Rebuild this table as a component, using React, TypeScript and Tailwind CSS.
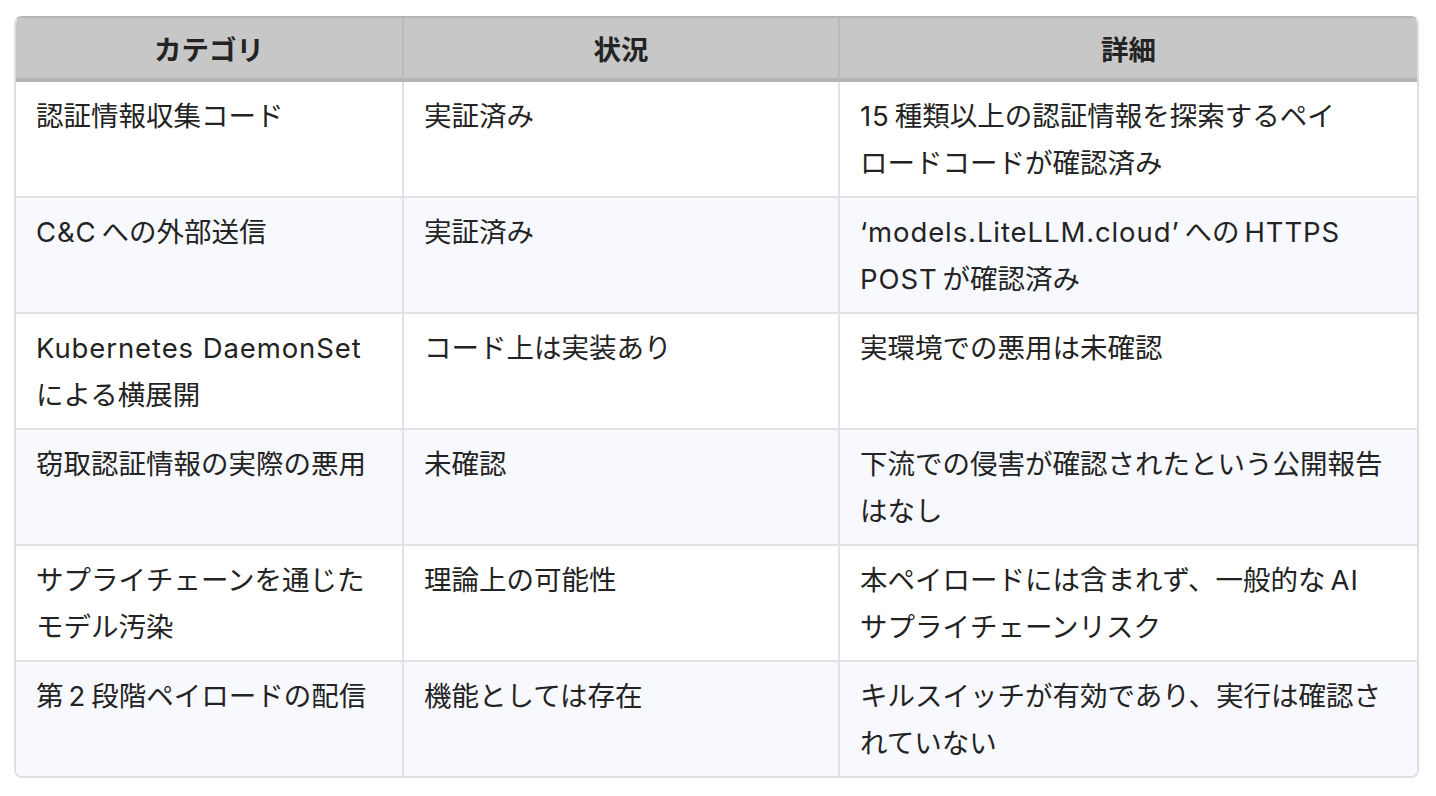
import React from "react";

const CJK = "[\\u3000-\\u9fff\\uff00-\\uffef]";
const boundary = new RegExp(`(?<=${CJK}) | (?=${CJK})`, "g");

function Latin({ t }: { t: string }) {
  const parts = t.split(/([\x20-\x7E‘’]+)/);
  return (
    <>
      {parts.map((p, i) =>
        /^[\x20-\x7E‘’]+$/.test(p) ? (
          <span key={i} className="tracking-[0.9px]">
            {p}
          </span>
        ) : (
          <React.Fragment key={i}>{p}</React.Fragment>
        )
      )}
    </>
  );
}

function T({ t }: { t: string }) {
  const segs = t.split(boundary);
  return (
    <>
      {segs.map((s, i) => (
        <React.Fragment key={i}>
          {i > 0 && <span className="inline-block w-[5px]" />}
          <Latin t={s} />
        </React.Fragment>
      ))}
    </>
  );
}

function L({ lines }: { lines: string[] }) {
  return (
    <>
      {lines.map((l, i) => (
        <React.Fragment key={i}>
          {i > 0 && <br />}
          <T t={l} />
        </React.Fragment>
      ))}
    </>
  );
}

type Row = { c: string[]; s: string[]; d: string[] };

const rows: Row[] = [
  {
    c: ["認証情報収集コード"],
    s: ["実証済み"],
    d: ["15 種類以上の認証情報を探索するペイ", "ロードコードが確認済み"],
  },
  {
    c: ["C&C への外部送信"],
    s: ["実証済み"],
    d: ["‘models.LiteLLM.cloud’ への HTTPS", "POST が確認済み"],
  },
  {
    c: ["Kubernetes DaemonSet", "による横展開"],
    s: ["コード上は実装あり"],
    d: ["実環境での悪用は未確認"],
  },
  {
    c: ["窃取認証情報の実際の悪用"],
    s: ["未確認"],
    d: ["下流での侵害が確認されたという公開報告", "はなし"],
  },
  {
    c: ["サプライチェーンを通じた", "モデル汚染"],
    s: ["理論上の可能性"],
    d: ["本ペイロードには含まれず、一般的な AI", "サプライチェーンリスク"],
  },
  {
    c: ["第 2 段階ペイロードの配信"],
    s: ["機能としては存在"],
    d: ["キルスイッチが有効であり、実行は確認さ", "れていない"],
  },
];

export default function App() {
  return (
    <div
      className="min-h-[796px] bg-white pt-[16px] pl-[14px]"
      style={{ fontFamily: 'Inter, "Noto Sans CJK JP", sans-serif' }}
    >
      <div className="w-[1405px] rounded-[8px] border-2 border-[#dedfe3] border-t-[#b6b6b6] overflow-hidden">
        <div className="grid grid-cols-[388px_436px_577px] text-[27.5px] leading-[47px] text-[#232323]">
          {["カテゴリ", "状況", "詳細"].map((h, i) => (
            <div
              key={h}
              className={
                i < 2
                  ? "h-[64px] pt-[4px] flex items-center justify-center bg-[#c7c7c7] border-b-4 border-b-[#b3b3b3] border-r-2 border-r-[#b9b9b9] font-bold"
                  : "h-[64px] pt-[4px] flex items-center justify-center bg-[#c7c7c7] border-b-4 border-b-[#b3b3b3] font-bold"
              }
            >
              {h}
            </div>
          ))}
          {rows.map((r, ri) => {
            const last = ri === rows.length - 1;
            const bg = ri % 2 === 1 ? "bg-[#f8f9fe]" : "bg-white";
            const base = `${bg} px-[20px] pt-[11px] pb-[9px] border-[#e1e2e6] ${last ? "" : "border-b-2"}`;
            return (
              <React.Fragment key={ri}>
                <div className={`${base} border-r-2`}>
                  <L lines={r.c} />
                </div>
                <div className={`${base} border-r-2`}>
                  <L lines={r.s} />
                </div>
                <div className={base}>
                  <L lines={r.d} />
                </div>
              </React.Fragment>
            );
          })}
        </div>
      </div>
    </div>
  );
}
